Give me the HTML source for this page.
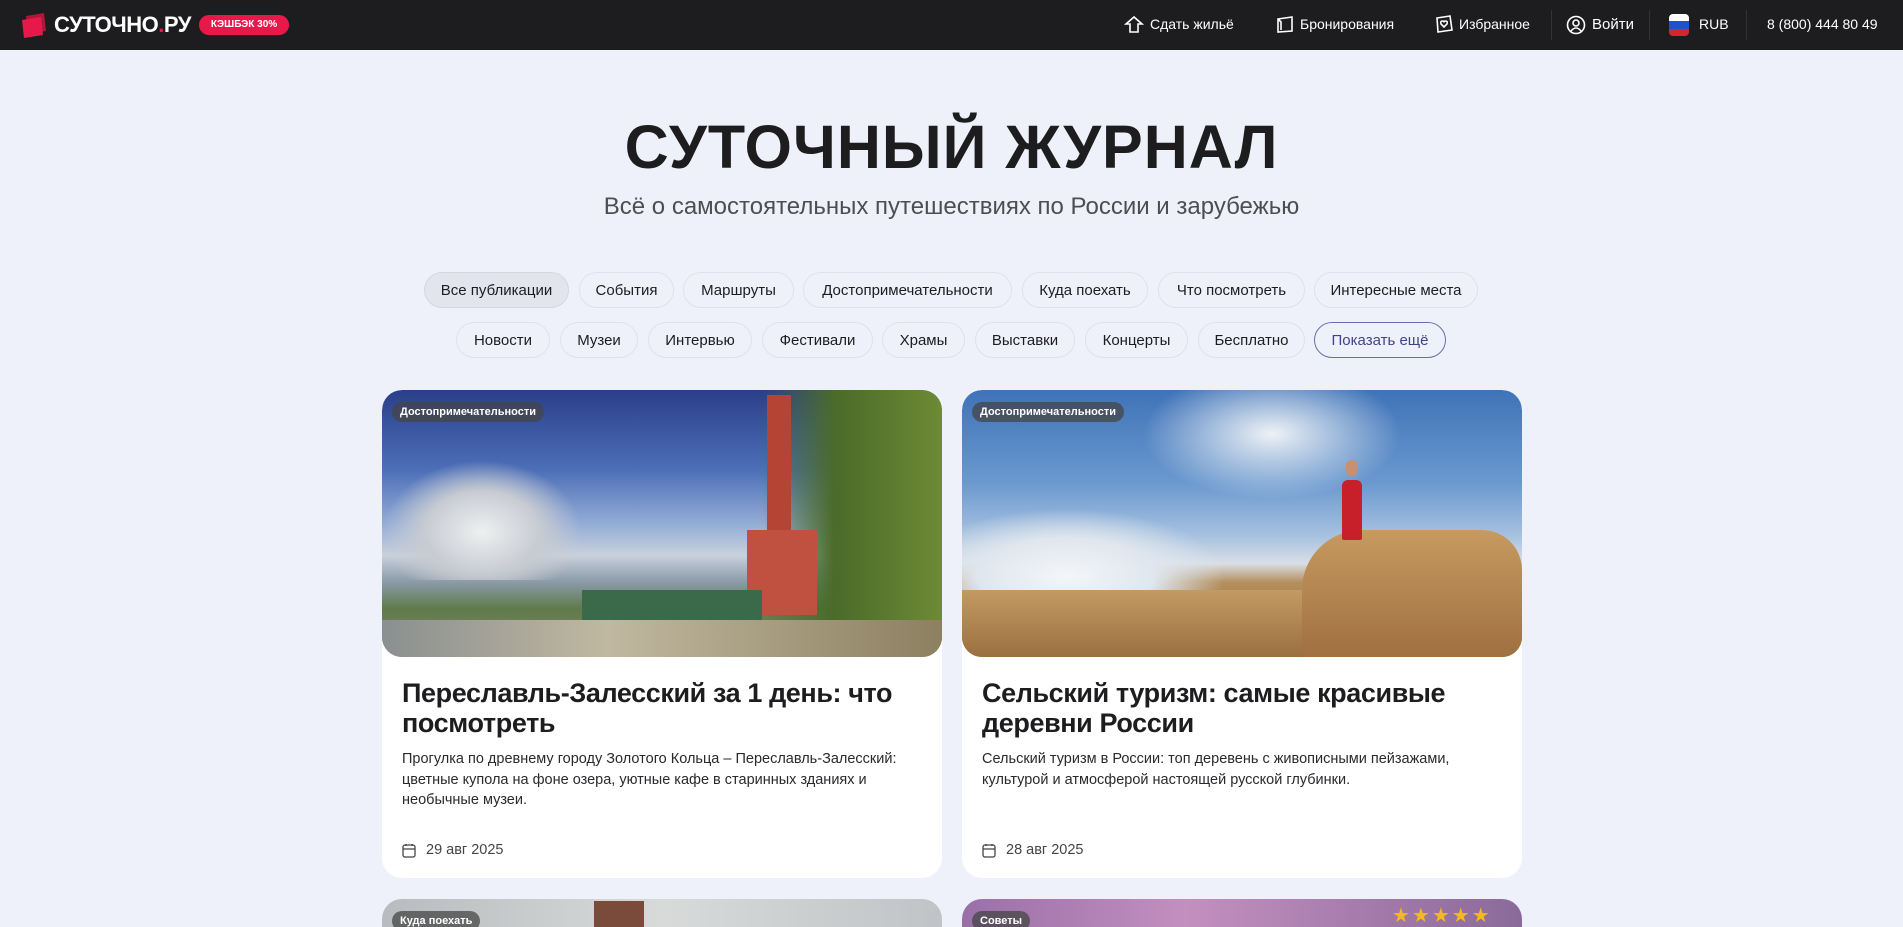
<!DOCTYPE html>
<html><head><meta charset="utf-8">
<style>
*{box-sizing:border-box;margin:0;padding:0}
html,body{width:1903px;height:927px;overflow:hidden}
body{background:#eff1fa;font-family:"Liberation Sans","DejaVu Sans",sans-serif;color:#1d1d1f;position:relative}
#wrap{position:absolute;left:0;top:0;width:1903px;height:927px;overflow:hidden}
.hdr{position:absolute;left:0;top:0;width:1903px;height:50px;background:#1d1d1f;color:#fff}
.abs{position:absolute}
.nav{position:absolute;top:16px;font-size:14px;color:#fff;white-space:nowrap}
.sep{position:absolute;top:10px;width:1px;height:30px;background:#333}
h1{position:absolute;left:0;width:1903px;top:112px;text-align:center;font-size:61px;font-weight:700;letter-spacing:1px;color:#1d1d1f}
.sub{position:absolute;left:0;width:1903px;top:193px;text-align:center;font-size:24px;color:#4d4e55}
.chip{position:absolute;height:36px;border:1px solid #dfe1ea;border-radius:18px;font-size:15px;line-height:36px;text-align:center;color:#1d1d1f;background:#eff1fa}
.card{position:absolute;width:560px;height:488px;background:#fff;border-radius:20px;overflow:hidden}
.img{position:absolute;left:0;top:0;width:560px;height:267px;border-radius:20px;overflow:hidden}
.tag{position:absolute;left:10px;top:12px;height:20px;padding:0 8px;border-radius:10px;background:rgba(70,70,70,.75);color:#fff;font-size:11px;font-weight:700;line-height:20px}
.ct{position:absolute;left:20px;top:288px;width:520px;font-size:27px;font-weight:700;line-height:30px;color:#1d1d1f;letter-spacing:-.4px}
.cd{position:absolute;left:20px;top:359px;width:520px;font-size:14.5px;line-height:20.5px;color:#2a2a2e}
.dt{position:absolute;left:20px;top:452px;font-size:14.5px;color:#444;padding-left:24px}
.dt svg{position:absolute;left:0;top:1px}
</style></head><body><div id="wrap">
<div class="hdr">
  <svg class="abs" style="left:20px;top:11px" width="28" height="28" viewBox="0 0 28 28"><path d="M6 5 L24 2 L26 20 L8 23Z" fill="#b01638"/><path d="M2 9 L21 6 L23 24 L4 27Z" fill="#e8194a"/></svg>
  <div class="abs" style="left:54px;top:12px;font-size:22px;font-weight:900;letter-spacing:-0.5px;color:#fff">СУТОЧНО<span style="color:#e8194a">.</span>РУ</div>
  <div class="abs" style="left:199px;top:15px;width:90px;height:20px;border-radius:10px;background:#e8194a;color:#fff;font-size:10px;font-weight:700;text-align:center;line-height:20px">КЭШБЭК 30%</div>
  <svg class="abs" style="left:1124px;top:15px" width="20" height="19" viewBox="0 0 20 19" fill="none" stroke="#fff" stroke-width="1.6"><path d="M2 9 L10 2 L18 9 L14 9 L14 17 L6 17 L6 9Z"/></svg>
  <div class="nav" style="left:1150px">Сдать жильё</div>
  <svg class="abs" style="left:1275px;top:16px" width="20" height="18" viewBox="0 0 20 18" fill="none" stroke="#fff" stroke-width="1.6"><path d="M3 3 L17 1 L17 15 L3 16Z"/><path d="M3 3 L6 6 L6 14"/></svg>
  <div class="nav" style="left:1300px">Бронирования</div>
  <svg class="abs" style="left:1434px;top:14px" width="20" height="20" viewBox="0 0 20 20" fill="none" stroke="#fff" stroke-width="1.6"><path d="M3 4 L16 2 L18 16 L4 18Z"/><path d="M10 13 L7 10 Q6 7 8.5 7 Q10 7 10 8.5 Q10 7 11.5 7 Q14 7 13 10Z"/></svg>
  <div class="nav" style="left:1459px">Избранное</div>
  <div class="sep" style="left:1551px"></div>
  <svg class="abs" style="left:1566px;top:15px" width="20" height="20" viewBox="0 0 20 20" fill="none" stroke="#fff" stroke-width="1.6"><circle cx="10" cy="10" r="8.5"/><circle cx="10" cy="8" r="3"/><path d="M5 16 Q10 10 15 16"/></svg>
  <div class="nav" style="left:1592px;font-size:15px">Войти</div>
  <div class="sep" style="left:1649px"></div>
  <div class="abs" style="left:1669px;top:14px;width:20px;height:22px;border-radius:4px;overflow:hidden"><div style="height:7px;background:#fff"></div><div style="height:8px;background:#1c53c9"></div><div style="height:7px;background:#d5262d"></div></div>
  <div class="nav" style="left:1699px">RUB</div>
  <div class="sep" style="left:1746px"></div>
  <div class="nav" style="left:1767px">8 (800) 444 80 49</div>
</div>

<h1>СУТОЧНЫЙ ЖУРНАЛ</h1>
<div class="sub">Всё о самостоятельных путешествиях по России и зарубежью</div>

<div class="chip" style="left:424px;top:272px;width:145px;background:#e3e5ee;border-color:#d4d6e0">Все публикации</div>
<div class="chip" style="left:579px;top:272px;width:95px">События</div>
<div class="chip" style="left:683px;top:272px;width:111px">Маршруты</div>
<div class="chip" style="left:803px;top:272px;width:209px">Достопримечательности</div>
<div class="chip" style="left:1022px;top:272px;width:126px">Куда поехать</div>
<div class="chip" style="left:1158px;top:272px;width:147px">Что посмотреть</div>
<div class="chip" style="left:1314px;top:272px;width:164px">Интересные места</div>

<div class="chip" style="left:456px;top:322px;width:94px">Новости</div>
<div class="chip" style="left:560px;top:322px;width:78px">Музеи</div>
<div class="chip" style="left:648px;top:322px;width:104px">Интервью</div>
<div class="chip" style="left:762px;top:322px;width:111px">Фестивали</div>
<div class="chip" style="left:882px;top:322px;width:83px">Храмы</div>
<div class="chip" style="left:975px;top:322px;width:100px">Выставки</div>
<div class="chip" style="left:1085px;top:322px;width:103px">Концерты</div>
<div class="chip" style="left:1198px;top:322px;width:107px">Бесплатно</div>
<div class="chip" style="left:1314px;top:322px;width:132px;border-color:#6a6ea8;color:#3f4488">Показать ещё</div>

<div class="card" style="left:382px;top:390px">
  <div class="img" style="background:linear-gradient(180deg,#2a3f8a 0%,#4d6fb8 30%,#93acd6 50%,#c9d1dc 62%,#8a9aa8 72%,#5f7a4a 82%,#8d8a70 100%)">
    <div class="abs" style="left:0;top:70px;width:200px;height:120px;background:radial-gradient(ellipse at 50% 60%,#eef0f0 0%,#c8ccd2 40%,rgba(150,160,180,0) 70%)"></div>
    <div class="abs" style="left:380px;top:0;width:180px;height:267px;background:linear-gradient(90deg,rgba(60,90,40,0),#4a6b2a 40%,#6d8a34)"></div>
    <div class="abs" style="left:385px;top:5px;width:24px;height:180px;background:#b54434"></div>
    <div class="abs" style="left:365px;top:140px;width:70px;height:85px;background:#c05040"></div>
    <div class="abs" style="left:200px;top:200px;width:180px;height:40px;background:#3b6a4a"></div>
    <div class="abs" style="left:0;top:230px;width:560px;height:37px;background:linear-gradient(90deg,#8a8f90,#c0b8a0 40%,#8d8060)"></div>
    <div class="tag">Достопримечательности</div>
  </div>
  <div class="ct">Переславль-Залесский за 1 день: что посмотреть</div>
  <div class="cd">Прогулка по древнему городу Золотого Кольца – Переславль-Залесский: цветные купола на фоне озера, уютные кафе в старинных зданиях и необычные музеи.</div>
  <div class="dt"><svg width="14" height="15" viewBox="0 0 14 15" fill="none" stroke="#444" stroke-width="1.3"><rect x="1" y="2" width="12" height="12" rx="2"/><path d="M1 6 H13 M4 1 V3 M10 1 V3"/></svg>29 авг 2025</div>
</div>

<div class="card" style="left:962px;top:390px">
  <div class="img" style="background:linear-gradient(180deg,#3f73b8 0%,#6b99cf 35%,#a8c2e0 55%,#d8dfe6 65%,#b5905e 72%,#a07848 85%,#7e5a34 100%)">
    <div class="abs" style="left:0;top:120px;width:260px;height:110px;background:radial-gradient(ellipse at 40% 60%,#f4f6f8 0%,#dfe6ee 40%,rgba(200,215,235,0) 72%)"></div>
    <div class="abs" style="left:180px;top:0;width:260px;height:110px;background:radial-gradient(ellipse at 50% 40%,#eef2f6 0%,rgba(200,215,235,0) 70%)"></div>
    <div class="abs" style="left:0;top:200px;width:560px;height:67px;background:linear-gradient(180deg,#c49a62,#9b7040)"></div>
    <div class="abs" style="left:340px;top:140px;width:220px;height:127px;background:linear-gradient(180deg,#c69a60,#a07040);border-radius:60px 40px 0 0"></div>
    <div class="abs" style="left:380px;top:90px;width:20px;height:60px;background:#c8202a;border-radius:6px 6px 2px 2px"></div>
    <div class="abs" style="left:384px;top:70px;width:12px;height:16px;background:#c89070;border-radius:6px"></div>
    <div class="tag">Достопримечательности</div>
  </div>
  <div class="ct">Сельский туризм: самые красивые деревни России</div>
  <div class="cd">Сельский туризм в России: топ деревень с живописными пейзажами, культурой и атмосферой настоящей русской глубинки.</div>
  <div class="dt"><svg width="14" height="15" viewBox="0 0 14 15" fill="none" stroke="#444" stroke-width="1.3"><rect x="1" y="2" width="12" height="12" rx="2"/><path d="M1 6 H13 M4 1 V3 M10 1 V3"/></svg>28 авг 2025</div>
</div>

<div class="card" style="left:382px;top:899px;height:28px;border-radius:20px 20px 0 0;background:linear-gradient(90deg,#b8bcbe,#d8dada 50%,#c0c4c6)">
  <div class="abs" style="left:212px;top:2px;width:50px;height:26px;background:#7a4a3a"></div>
  <div class="tag" style="top:12px">Куда поехать</div>
</div>
<div class="card" style="left:962px;top:899px;height:28px;border-radius:20px 20px 0 0;background:linear-gradient(90deg,#9a6fa8,#c38fbf 40%,#8a6a9a)">
  <div class="abs" style="left:430px;top:4px;font-size:20px;color:#f5b820;letter-spacing:2px">★★★★★</div>
  <div class="tag" style="top:12px">Советы</div>
</div>
</div></body></html>
